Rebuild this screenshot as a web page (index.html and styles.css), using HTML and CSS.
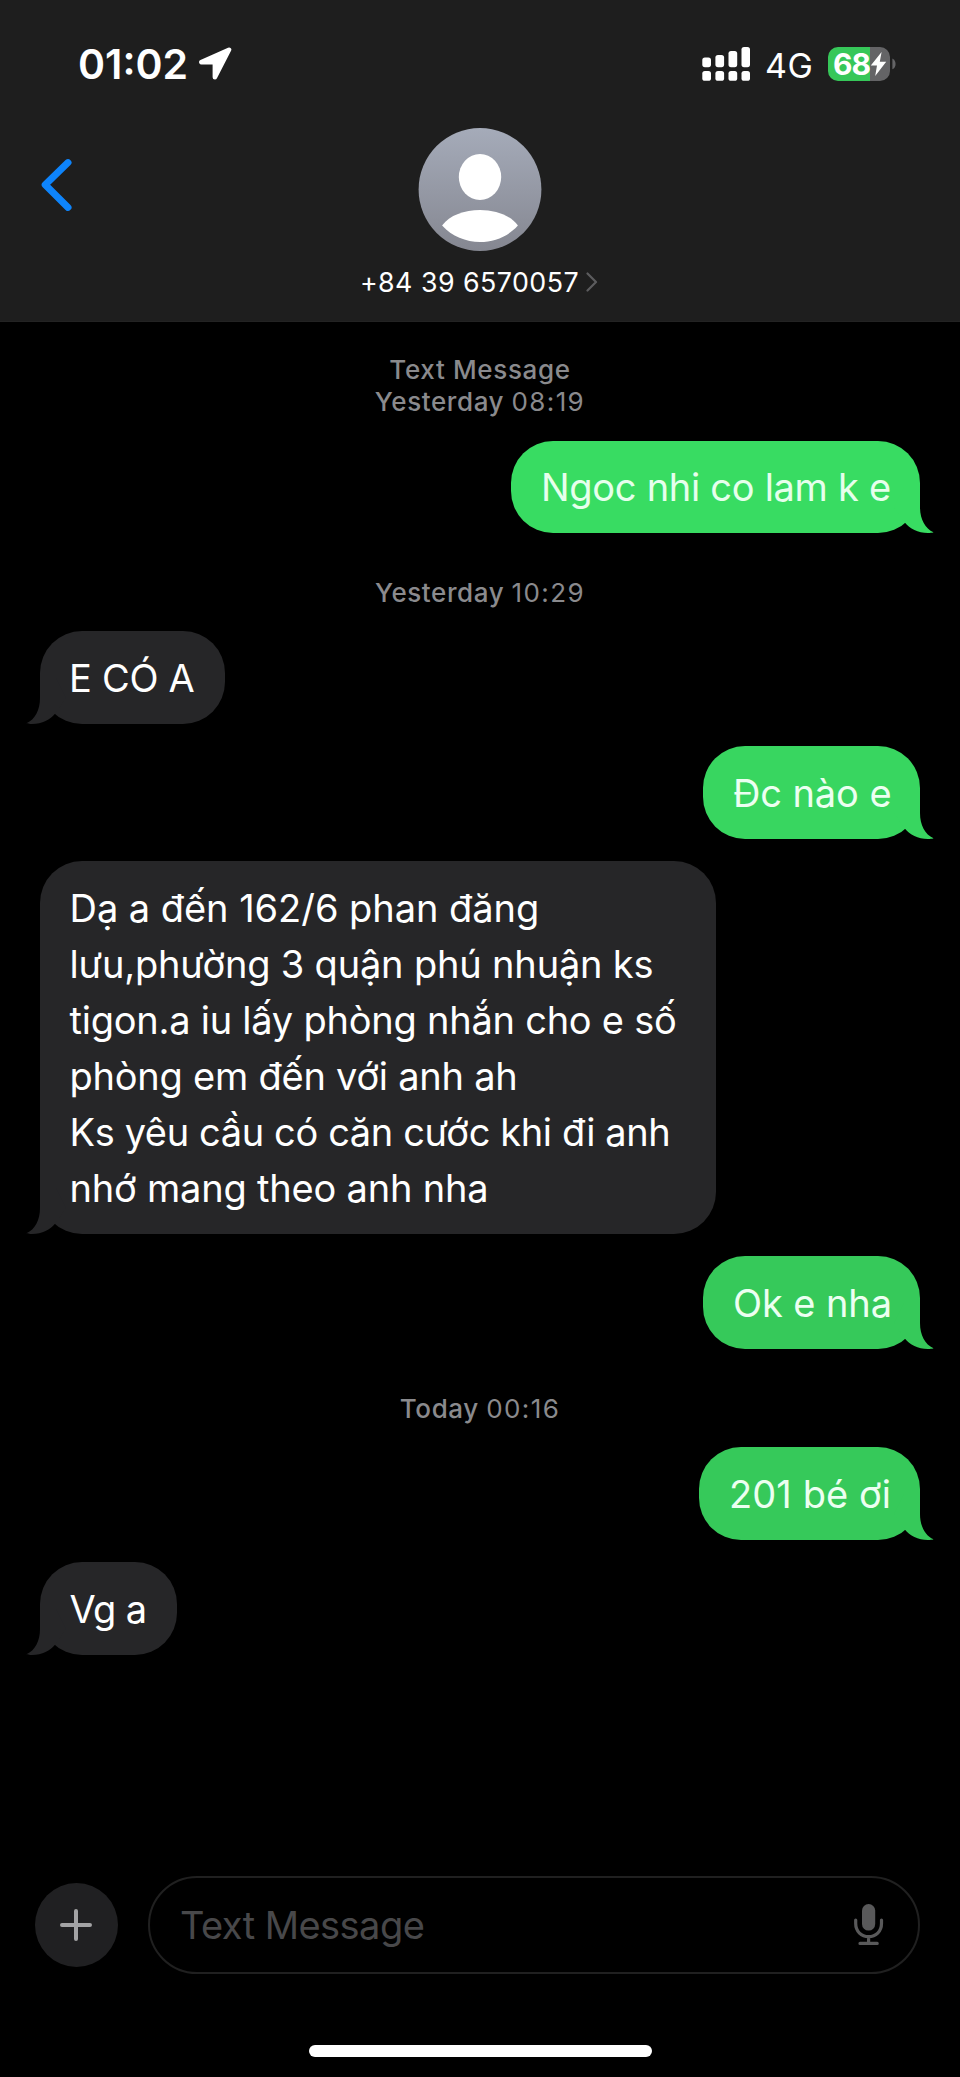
FILE: index.html
```html
<!DOCTYPE html>
<html lang="vi">
<head>
<meta charset="utf-8">
<title>Messages</title>
<link rel="stylesheet" href="styles.css">
</head>
<body>
<svg class="defs" width="0" height="0" aria-hidden="true">
  <symbol id="tail" viewBox="0 0 40 46">
    <path d="M26 0V20C26 32 31 41.5 39.500 45.300C38 46 36 46 34 46C24 46 15.500 41.500 11 35.800L0 20L10 0Z" fill="currentColor"/>
  </symbol>
</svg>
<div class="screen">
  <header class="header">
    <div class="status">
      <span class="time">01:02</span>
      <svg class="location" width="34" height="34" viewBox="0 0 34 34"><path d="M31 2.800L3.400 15.200H16.900V30.200Z" fill="#fff" stroke="#fff" stroke-width="4.600" stroke-linejoin="round"/></svg>
      <svg class="signal" width="48" height="34" viewBox="0 0 48 34" fill="#fff">
        <rect x="0.300" y="10.400" width="8.700" height="9.800" rx="2.600"/><rect x="13.400" y="8" width="8.700" height="12.200" rx="2.600"/><rect x="26.500" y="4" width="8.700" height="16.200" rx="2.600"/><rect x="39.500" y="0" width="8.500" height="20.200" rx="2.600"/>
        <rect x="0.300" y="24" width="8.700" height="9.800" rx="2.600"/><rect x="13.400" y="24" width="8.700" height="9.800" rx="2.600"/><rect x="26.500" y="24" width="8.700" height="9.800" rx="2.600"/><rect x="39.500" y="24" width="8.500" height="9.800" rx="2.600"/>
      </svg>
      <span class="network">4G</span>
      <div class="battery">
        <span class="level">68</span>
        <svg width="17" height="26" viewBox="0 0 17 26"><path d="M11.600 1L.8 14.600H7L5.200 25L16.200 10.700H9.800Z" fill="#fff"/></svg>
      </div>
      <svg class="nub" width="4" height="12" viewBox="0 0 4 12"><path d="M.4 .6C4.600 2.400 4.600 9.400 .4 11.200Z" fill="#646466"/></svg>
    </div>
    <div class="contact">
      <svg class="back" width="32" height="54" viewBox="0 0 32 54"><path d="M28 4.600L5.200 26.800L28 49.400" fill="none" stroke="#0e84fb" stroke-width="7" stroke-linecap="round" stroke-linejoin="round"/></svg>
      <div class="person">
        <svg width="124" height="123" viewBox="0 0 124 123">
          <defs><linearGradient id="av" x1="0" y1="0" x2="0" y2="1"><stop offset="0" stop-color="#a5abb9"/><stop offset="1" stop-color="#858791"/></linearGradient></defs>
          <circle cx="62" cy="61.500" r="61.400" fill="url(#av)"/>
          <ellipse cx="62" cy="49" rx="21.200" ry="23" fill="#fff"/>
          <path d="M24.100 97.600C38.500 76.800 85.500 76.800 99.900 97.600C80.500 119.500 43.500 119.500 24.100 97.600Z" fill="#fff"/>
        </svg>
        <div class="number"><span>+84 39 6570057</span><svg width="12" height="20" viewBox="0 0 12 20"><path d="M1.500 1.500L10 10L1.500 18.500" fill="none" stroke="#5c5c5e" stroke-width="2.200" stroke-linecap="round" stroke-linejoin="round"/></svg></div>
      </div>
    </div>
  </header>

  <main class="chat">
    <div class="stamp first"><div class="kind">Text Message</div><div><b>Yesterday</b> <span class="clock">08:19</span></div></div>
    <div class="bubble out g1">Ngoc nhi co lam k e<svg class="tail"><use href="#tail"/></svg></div>
    <div class="stamp"><b>Yesterday</b> <span class="clock">10:29</span></div>
    <div class="bubble in w1">E CÓ A<svg class="tail"><use href="#tail"/></svg></div>
    <div class="bubble out g2"><span class="even">Đc nào e</span><svg class="tail"><use href="#tail"/></svg></div>
    <div class="bubble in long"><span class="loose">Dạ a đến 162/6 phan đăng</span><br><span class="snug">lưu,phường 3 quận phú nhuận ks</span><br>tigon.a iu lấy phòng nhắn cho e số<br>phòng em đến với anh ah<br><span class="tight">Ks yêu cầu có căn cước khi đi anh</span><br><span class="mild">nhớ mang theo anh nha</span><svg class="tail"><use href="#tail"/></svg></div>
    <div class="bubble out g3"><span class="even">Ok e nha</span><svg class="tail"><use href="#tail"/></svg></div>
    <div class="stamp"><b>Today</b> <span class="clock">00:16</span></div>
    <div class="bubble out g4"><span class="wide">201 bé ơi</span><svg class="tail"><use href="#tail"/></svg></div>
    <div class="bubble in w2">Vg a<svg class="tail"><use href="#tail"/></svg></div>
  </main>

  <footer class="composer">
    <div class="plus"><svg width="32" height="32" viewBox="0 0 32 32"><path d="M16 2V30M2 16H30" stroke="#a3a3a5" stroke-width="4" stroke-linecap="round"/></svg></div>
    <div class="field">
      <span>Text Message</span>
      <svg width="30" height="42" viewBox="0 0 30 42"><rect x="8" y="0" width="13.200" height="26.600" rx="6.600" fill="#59595a"/><path d="M1.700 16V19.500C1.700 27.500 7.400 32.600 14.600 32.600S27.500 27.500 27.500 19.500V16M14.600 32.600V39M6 39.400H23.200" fill="none" stroke="#59595a" stroke-width="3.200" stroke-linecap="round"/></svg>
    </div>
  </footer>
  <div class="home"></div>
</div>
</body>
</html>
```
FILE: styles.css
```css
* { box-sizing: border-box; }
body { margin: 0; background: #000; }
svg { display: block; flex: none; }
.defs { position: absolute; }
.screen {
  width: 960px;
  height: 2077px;
  display: flex;
  flex-direction: column;
  background: #000;
  color: #fff;
  font-family: Inter, "Liberation Sans", sans-serif;
  overflow: hidden;
}

/* header */
.header { height: 322px; background: #1e1e1e; border-bottom: 1px solid #232323; flex: none; }
.status { display: flex; align-items: center; height: 128px; padding-left: 78px; }
.time { width: 120px; font-size: 41px; font-weight: 560; line-height: 50px; }
.signal { margin-left: 470px; }
.network { width: 63px; margin-left: 15px; font-size: 34px; letter-spacing: 0.6px; line-height: 40px; padding-top: 3px; }
.battery {
  display: flex;
  align-items: center;
  width: 62px;
  height: 34px;
  border-radius: 10px;
  background: linear-gradient(90deg, #36c759 42px, #646466 42px);
}
.level { width: 42px; padding-left: 5px; font-size: 30px; font-weight: 650; letter-spacing: -0.9px; line-height: 34px; }
.nub { margin-left: 2px; }
.contact { display: grid; grid-template-columns: 1fr auto 1fr; }
.back { margin: 30px 0 0 40px; }
.person { display: flex; flex-direction: column; align-items: center; }
.number {
  display: flex;
  align-items: center;
  gap: 7px;
  margin: 14px 2px 0 0;
  font-size: 26.8px;
  letter-spacing: 0.46px;
  line-height: 34px;
}

/* conversation */
.chat { display: flex; flex-direction: column; gap: 22.5px; padding: 32px 40px 0; height: 1554px; flex: none; }
.stamp {
  margin-top: 21.5px;
  text-align: center;
  font-size: 26px;
  line-height: 32px;
  color: #8a8a8d;
}
.stamp.first { margin: 0; }
.stamp b { font-weight: 540; letter-spacing: 0.6px; }
.clock { letter-spacing: 1.4px; }
.kind { font-weight: 460; letter-spacing: 0.65px; }
.bubble {
  position: relative;
  padding: 18.2px 0 18.3px 30px;
  border-radius: 42px;
  font-size: 38px;
  line-height: 56px;
  letter-spacing: -0.24px;
  white-space: nowrap;
}
.out { align-self: flex-end; color: #ecfff1; }
.in { align-self: flex-start; background: #262628; color: #fff; }
.g1 { width: 409px; background: #38dc62; color: #e6ffec; letter-spacing: -0.29px; }
.g2 { width: 217px; background: #38d660; }
.g3 { width: 217px; background: #36c95a; }
.g4 { width: 221px; background: #36c95a; }
.w1 { width: 185px; letter-spacing: -0.3px; padding-left: 29px; }
.w2 { width: 137px; letter-spacing: -0.7px; padding-left: 29.5px; }
.long { width: 676px; padding-left: 29.5px; }
.even { letter-spacing: -0.1px; }
.wide { letter-spacing: 0.1px; }
.loose { letter-spacing: -0.04px; }
.tight { letter-spacing: -0.38px; }
.snug { letter-spacing: -0.18px; }
.mild { letter-spacing: -0.2px; }
.tail { position: absolute; bottom: 0; width: 40px; height: 46px; }
.out .tail { right: -14px; }
.in .tail { left: -14px; transform: scaleX(-1); color: #262628; }
.g1 .tail { color: #38dc62; }
.g2 .tail { color: #38d660; }
.g3 .tail, .g4 .tail { color: #36c95a; }

/* composer */
.composer { display: flex; align-items: center; gap: 30px; padding: 0 40px 0 34.5px; height: 98px; flex: none; }
.plus {
  display: flex;
  align-items: center;
  justify-content: center;
  width: 83px;
  height: 84px;
  border-radius: 50%;
  background: #202022;
}
.field {
  display: flex;
  align-items: center;
  justify-content: space-between;
  flex: 1;
  height: 98px;
  padding: 0 34px 0 30.5px;
  border: 2.5px solid #202020;
  border-radius: 49px;
  font-size: 38px;
  letter-spacing: -0.55px;
  line-height: 50px;
  color: #48484a;
}
.home { width: 343px; height: 12px; margin: 71px auto 0; border-radius: 6px; background: #fff; flex: none; }
```
